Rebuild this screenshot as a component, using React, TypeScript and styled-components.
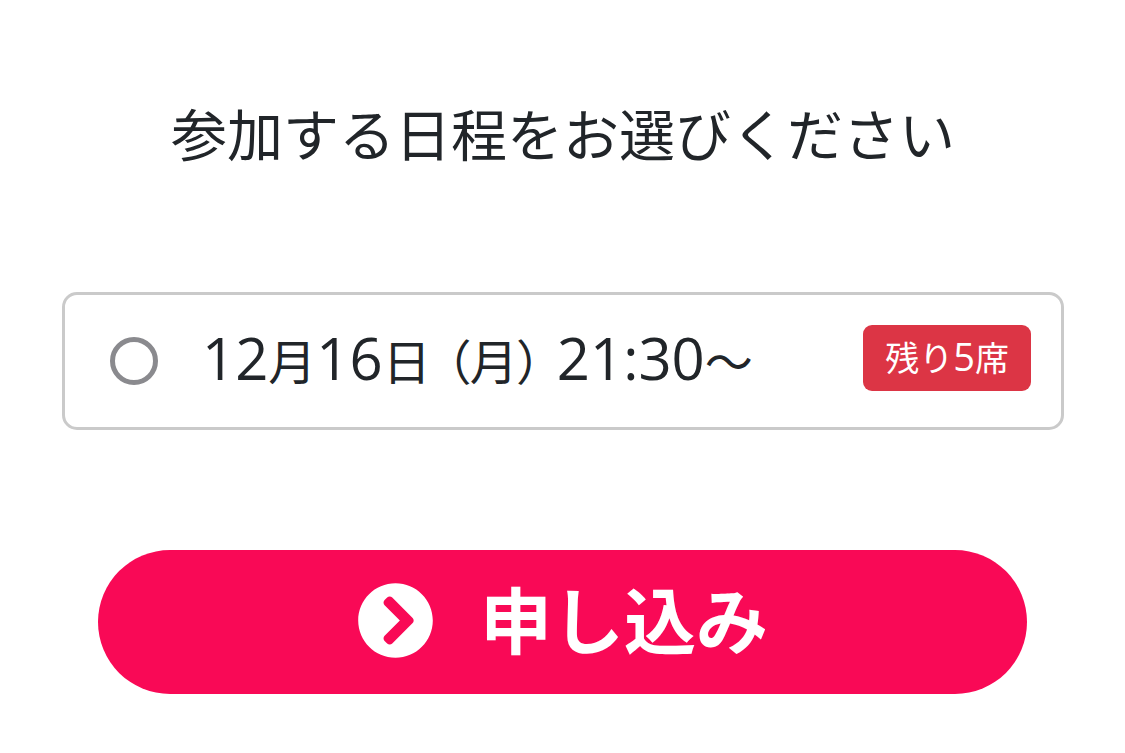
import React from "react";
import styled, { createGlobalStyle } from "styled-components";
import { FaChevronCircleRight } from "react-icons/fa";

const GlobalStyle = createGlobalStyle`
  *, *::before, *::after { box-sizing: border-box; }
  body {
    margin: 0;
    background: #fff;
    color: #212529;
    font-family: "Noto Sans CJK JP", sans-serif;
  }
`;

const Form = styled.form`
  display: flex;
  flex-direction: column;
  padding: 88px 61px 59px 62px;
`;

const Title = styled.h1`
  margin: 0 0 116px;
  font-size: 56px;
  line-height: 88px;
  font-weight: 400;
  text-align: center;
`;

const Option = styled.label`
  display: flex;
  align-items: center;
  min-height: 138px;
  padding: 0 30px 0 45px;
  border: 3px solid #cacaca;
  border-radius: 15px;
`;

const Radio = styled.input`
  appearance: none;
  flex: none;
  width: 48px;
  height: 48px;
  margin: 0 44px 0 0;
  border: 5px solid #8a8a8e;
  border-radius: 50%;
  background: #fff;
  &:checked { box-shadow: inset 0 0 0 8px #fff; background: #dc3545; }
`;

const DateText = styled.span`
  flex: 1;
  padding-bottom: 4px;
  font-size: 48px;
  line-height: 72px;
  white-space: pre;
  font-feature-settings: "palt";
`;

const Numeral = styled.span<{ $size: number }>`
  font-family: "Open Sans", sans-serif;
  font-size: ${(p) => p.$size}px;
  line-height: 1;
`;

const Badge = styled.span`
  height: 66px;
  margin-bottom: 6px;
  padding: 0 22px;
  border-radius: 9px;
  background: #dc3545;
  color: #fff;
  font-size: 34px;
  line-height: 64px;
  white-space: nowrap;
`;

const Submit = styled.button`
  display: flex;
  align-items: center;
  justify-content: center;
  gap: 46px;
  min-height: 144px;
  margin: 120px 37px 0 36px;
  padding: 0 24px 4px;
  border: 0;
  border-radius: 72px;
  background: #f90956;
  color: #fff;
  font: inherit;
  font-size: 72px;
  font-weight: 700;
  line-height: 108px;
`;

const SubmitLabel = styled.span`
  padding-bottom: 6px;
`;

export default function App() {
  return (
    <>
      <GlobalStyle />
      <Form onSubmit={(e) => e.preventDefault()}>
        <Title>参加する日程をお選びください</Title>
        <Option>
          <Radio type="radio" name="schedule" />
          <DateText>
            <Numeral $size={58}>12</Numeral>月<Numeral $size={58}>16</Numeral>日
            <Numeral $size={58}> </Numeral>（月）
            <Numeral $size={58}> 21:30</Numeral>〜
          </DateText>
          <Badge>
            残り<Numeral $size={38}>5</Numeral>席
          </Badge>
        </Option>
        <Submit type="submit">
          <FaChevronCircleRight size={77} aria-hidden />
          <SubmitLabel>申し込み</SubmitLabel>
        </Submit>
      </Form>
    </>
  );
}
